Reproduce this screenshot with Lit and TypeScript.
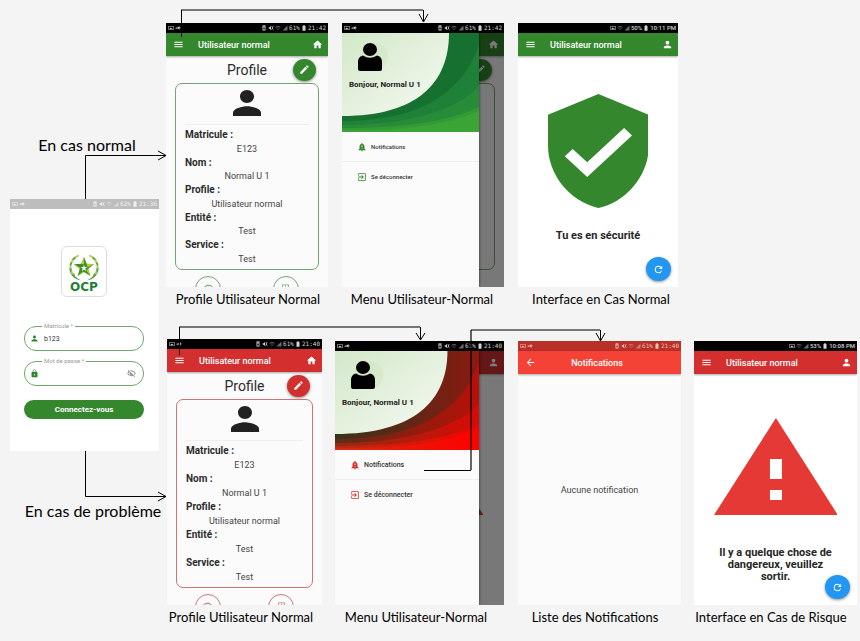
import { LitElement, html, svg, css, nothing } from "lit";
import { customElement, property } from "lit/decorators.js";
import { styleMap } from "lit/directives/style-map.js";

type Kind = "login" | "profile" | "menu" | "safe" | "list" | "risk";
type Tone = "green" | "red";

interface ScreenNode {
  kind: Kind;
  tone: Tone;
  x: number;
  y: number;
  w: number;
  h: number;
  clock: string;
  battery: string;
}

const screens: ScreenNode[] = [
  { kind: "login", tone: "green", x: 10, y: 199, w: 149, h: 252, clock: "21:36", battery: "62%" },
  { kind: "profile", tone: "green", x: 166, y: 23, w: 162, h: 264, clock: "21:42", battery: "61%" },
  { kind: "menu", tone: "green", x: 342, y: 23, w: 162, h: 264, clock: "21:42", battery: "61%" },
  { kind: "safe", tone: "green", x: 518, y: 23, w: 160, h: 264, clock: "10:11 PM", battery: "50%" },
  { kind: "profile", tone: "red", x: 167, y: 339, w: 155, h: 266, clock: "21:40", battery: "61%" },
  { kind: "menu", tone: "red", x: 335, y: 341, w: 169, h: 264, clock: "21:40", battery: "61%" },
  { kind: "list", tone: "red", x: 518, y: 341, w: 163, h: 264, clock: "21:40", battery: "61%" },
  { kind: "risk", tone: "red", x: 694, y: 341, w: 163, h: 264, clock: "10:08 PM", battery: "53%" },
];

const captions = [
  { x: 248, y: 299, text: "Profile Utilisateur Normal" },
  { x: 422, y: 299, text: "Menu Utilisateur-Normal" },
  { x: 601, y: 299, text: "Interface en Cas Normal" },
  { x: 241, y: 617, text: "Profile Utilisateur Normal" },
  { x: 416, y: 617, text: "Menu Utilisateur-Normal" },
  { x: 595, y: 617, text: "Liste des Notifications" },
  { x: 771, y: 617, text: "Interface en Cas de Risque" },
];

const branches = [
  { x: 87, y: 145, text: "En cas normal" },
  { x: 93, y: 511, text: "En cas de problème" },
];

const details = [
  ["Matricule :", "E123"],
  ["Nom :", "Normal U 1"],
  ["Profile :", "Utilisateur normal"],
  ["Entité :", "Test"],
  ["Service :", "Test"],
];

const glyphs: Record<string, string> = {
  menu: "M3 18h18v-2H3v2zm0-5h18v-2H3v2zm0-7v2h18V6H3z",
  home: "M10 20v-6h4v6h5v-8h3L12 3 2 12h3v8z",
  person: "M12 12c2.21 0 4-1.79 4-4s-1.79-4-4-4-4 1.79-4 4 1.79 4 4 4zm0 2c-2.67 0-8 1.34-8 4v2h16v-2c0-2.66-5.33-4-8-4z",
  edit: "M3 17.25V21h3.75L17.81 9.94l-3.75-3.75L3 17.25zM20.71 7.04a1 1 0 0 0 0-1.41l-2.34-2.34a1 1 0 0 0-1.41 0l-1.83 1.83 3.75 3.75 1.83-1.83z",
  lock: "M18 8h-1V6c0-2.76-2.24-5-5-5S7 3.24 7 6v2H6c-1.1 0-2 .9-2 2v10c0 1.1.9 2 2 2h12c1.1 0 2-.9 2-2V10c0-1.1-.9-2-2-2zm-6 9c-1.1 0-2-.9-2-2s.9-2 2-2 2 .9 2 2-.9 2-2 2zm3.1-9H8.9V6c0-1.71 1.39-3.1 3.1-3.1s3.1 1.39 3.1 3.1v2z",
  eyeOff: "M12 6c3.79 0 7.17 2.13 8.82 5.5a9.8 9.8 0 0 1-2.41 3.12l1.41 1.41A11.8 11.8 0 0 0 23 11.5C21.27 7.11 17 4 12 4c-1.27 0-2.49.2-3.64.57l1.65 1.65C10.66 6.09 11.32 6 12 6zM2.01 3.87l2.68 2.68A11.7 11.7 0 0 0 1 11.5C2.73 15.89 7 19 12 19c1.52 0 2.98-.29 4.32-.82l3.42 3.42 1.41-1.41L3.42 2.45 2.01 3.87zm7.5 7.5 2.61 2.61c-.04.01-.08.02-.12.02a2.5 2.5 0 0 1-2.5-2.5l.01-.13zm-3.4-3.4 1.75 1.75a4.6 4.6 0 0 0-.36 1.78 4.5 4.5 0 0 0 6.27 4.14l.98.98c-.88.24-1.8.38-2.75.38-3.79 0-7.17-2.13-8.82-5.5.7-1.43 1.72-2.61 2.93-3.53z",
  bell: "M18 16v-5c0-3.07-1.64-5.64-4.5-6.32V4a1.5 1.5 0 0 0-3 0v.68C7.63 5.36 6 7.92 6 11v5l-3 3v1h18v-1l-3-3zm-5 0h-2v-2h2v2zm0-4h-2V8h2v4zm-1 10.5a2 2 0 0 0 2-2h-4c0 1.1.9 2 2 2z",
  exit: "M10.09 15.59 11.5 17l5-5-5-5-1.41 1.41L12.67 11H3v2h9.67l-2.58 2.59zM19 3H5a2 2 0 0 0-2 2v4h2V5h14v14H5v-4H3v4a2 2 0 0 0 2 2h14a2 2 0 0 0 2-2V5a2 2 0 0 0-2-2z",
  refresh: "M17.65 6.35A7.96 7.96 0 0 0 12 4a8 8 0 1 0 7.73 10h-2.08A6 6 0 1 1 12 6c1.66 0 3.14.69 4.22 1.78L13 11h7V4l-2.35 2.35z",
  back: "M20 11H7.83l5.59-5.59L12 4l-8 8 8 8 1.41-1.41L7.83 13H20v-2z",
  wifi: "M1 9l2 2c4.97-4.97 13.03-4.97 18 0l2-2C16.93 2.93 7.08 2.93 1 9zm4 4l2 2a7.07 7.07 0 0 1 10 0l2-2C15.14 9.14 8.87 9.14 5 13zm4 4 3 3 3-3a4.24 4.24 0 0 0-6 0z",
  box: "M3 4h18v16H3V4zm2 2v12h14V6H5zm6 1h2v4h3l-4 4-4-4h3z",
  picture: "M2 4h20v16H2V4zm2 2v12h16V6H4zm2 10 4-6 3 4 2-2 3 4z",
  plug: "M2 11h4l3-5v12l-3-4H2zm9-3h4V5h3v5h4v3h-4v5h-3v-3h-4z",
  trash: "M6 6h12v16H6zM4 3h16v2H4zm5-2h6v2H9zm0 9v8h6v-8z",
  mute: "M3 9v6h4l5 5V4L7 9zm11-4 2-1 6 15-2 1zm6-1h2L15 20h-2z",
  signal: "M2 22h20V2z",
  battery: "M18 4h-3V1H9v3H6v19h12V4z",
};

const icon = (name: string) =>
  html`<svg class="icon" viewBox="0 0 24 24" aria-hidden="true"><path d=${glyphs[name]} /></svg>`;

@customElement("phone-status")
export class PhoneStatus extends LitElement {
  @property() clock = "";
  @property() battery = "";
  @property({ type: Boolean, reflect: true }) compact = false;

  static styles = css`
    :host {
      display: flex;
      align-items: center;
      gap: 1px;
      height: 10px;
      padding: 0 2px;
      font: 6px/10px "DejaVu Sans Mono", monospace;
      white-space: nowrap;
    }
    :host([compact]) {
      font-family: Roboto, sans-serif;
      font-weight: 500;
    }
    .icon {
      width: 6px;
      height: 6px;
      fill: currentColor;
    }
    .push {
      flex: 1;
    }
    .faint {
      opacity: 0.5;
    }
  `;

  render() {
    return html`
      ${this.compact ? nothing : html`${icon("picture")}${icon("plug")}`}
      <span class="push"></span>
      ${this.compact ? icon("picture") : html`${icon("trash")}${icon("mute")}`}
      <svg class="icon faint" viewBox="0 0 24 24" aria-hidden="true"><path d=${glyphs.wifi} /></svg>
      <svg class="icon faint" viewBox="0 0 24 24" aria-hidden="true"><path d=${glyphs.signal} /></svg>
      <span>${this.battery}</span>
      ${icon("battery")}
      <span>${this.clock}</span>
    `;
  }
}

@customElement("phone-screen")
export class PhoneScreen extends LitElement {
  @property() kind: Kind = "profile";
  @property({ reflect: true }) tone: Tone = "green";
  @property() clock = "";
  @property() battery = "";

  static styles = css`
    :host {
      --main: #34872d;
      --outline: #6fa86b;
      --link: 6px;
      display: flex;
      flex-direction: column;
      overflow: hidden;
      background: #fbfbfb;
      color: #2b2b2b;
      font-family: Roboto, sans-serif;
    }
    :host([tone="red"]) {
      --main: #d32f2f;
      --outline: #cf7376;
      --link: 7px;
    }
    * {
      box-sizing: border-box;
    }
    h2, h3, p, dl, dd, ul {
      margin: 0;
      padding: 0;
    }
    button {
      border: 0;
      padding: 0;
      background: none;
      color: inherit;
      font: inherit;
      display: flex;
      align-items: center;
      justify-content: center;
    }
    .icon {
      width: 11px;
      height: 11px;
      fill: currentColor;
      flex: none;
    }
    .status {
      flex: none;
      background: #000;
      color: #d5d5d5;
    }
    .status.grey {
      background: #bdbdbd;
      color: #f2f2f2;
    }
    .status.brick {
      background: #b93028;
      color: #f0c0bc;
    }
    .stage {
      flex: 1;
      min-height: 0;
      position: relative;
      display: flex;
      flex-direction: column;
    }
    .white {
      background: #fff;
    }
    .bar {
      flex: none;
      display: flex;
      align-items: center;
      height: 23px;
      padding: 0 5px 0 7px;
      background: var(--main);
      color: #fff;
      box-shadow: 0 1px 2px rgb(0 0 0 / 35%);
    }
    .bar h2 {
      flex: 1;
      margin-left: 14px;
      font-size: 9px;
      line-height: 12px;
      font-weight: 500;
    }
    .bar.flame {
      background: #f44336;
    }
    .bar.flame h2 {
      margin: 0 18px 0 0;
      text-align: center;
    }
    .heading {
      flex: none;
      display: grid;
      grid-template-columns: 1fr auto 1fr;
      align-items: center;
      height: 27px;
      padding: 0 12px;
    }
    .heading h3 {
      grid-column: 2;
      font-size: 14px;
      line-height: 18px;
      font-weight: 400;
    }
    .fab {
      grid-column: 3;
      justify-self: end;
      width: 23px;
      height: 22px;
      border-radius: 50%;
      background: var(--main);
      color: #fff;
      box-shadow: 0 1px 3px rgb(0 0 0 / 45%);
    }
    .fab.float {
      position: absolute;
      right: 7px;
      bottom: 6px;
      width: 25px;
      height: 24px;
      background: #2196f3;
    }
    .card {
      flex: 1;
      min-height: 0;
      display: flex;
      flex-direction: column;
      margin: 0 9px;
      padding: 6px 9px 4px;
      border: 1px solid var(--outline);
      border-radius: 7px;
    }
    .avatar {
      flex: none;
      align-self: center;
      width: 28px;
      height: 26px;
      fill: #212121;
    }
    .rule {
      width: 100%;
      margin: 8px 0 4px;
      border: 0;
      border-top: 1px solid #eee;
    }
    .details {
      flex: 1;
      display: flex;
      flex-direction: column;
      justify-content: space-between;
      font-size: 9px;
      line-height: 12px;
    }
    .details dt {
      font-size: 10px;
      font-weight: 700;
    }
    .details dd {
      text-align: center;
      color: #444;
    }
    .shortcuts {
      flex: none;
      display: flex;
      justify-content: space-between;
      height: 17px;
      padding: 6px 18% 0;
      color: var(--outline);
    }
    .round {
      width: 26px;
      height: 26px;
      padding-bottom: 4px;
      border: 1px solid var(--outline);
      border-radius: 50%;
    }
    .round .icon {
      width: 9px;
      height: 9px;
    }

    .login {
      align-items: center;
      padding: 37px 15px 0 14px;
      background: #fff;
      flex: 1;
      display: flex;
      flex-direction: column;
    }
    .logo {
      display: flex;
      flex-direction: column;
      align-items: center;
      width: 46px;
      height: 51px;
      padding-top: 5px;
      margin-bottom: 29px;
      border: 1px solid #ddd;
      border-radius: 6px;
      color: #1f7f35;
      font: 700 12px/10px "DejaVu Sans", sans-serif;
    }
    .emblem {
      width: 32px;
      height: 30px;
      flex: none;
    }
    .field {
      position: relative;
      display: flex;
      align-items: center;
      gap: 5px;
      width: 100%;
      height: 25px;
      margin-bottom: 10px;
      padding: 0 7px 0 5px;
      border: 1px solid var(--outline);
      border-radius: 12px;
      color: #2d842a;
    }
    .field .icon {
      width: 9px;
      height: 9px;
    }
    .field label {
      position: absolute;
      left: 17px;
      top: -5px;
      padding: 0 2px;
      background: #fff;
      color: #999;
      font-size: 6px;
      line-height: 8px;
    }
    .field input {
      flex: 1;
      min-width: 0;
      padding: 0;
      border: 0;
      outline: 0;
      background: none;
      color: #333;
      font: 7px/10px Roboto, sans-serif;
    }
    .reveal {
      color: #777;
    }
    .submit {
      width: 100%;
      height: 19px;
      margin-top: 4px;
      border-radius: 10px;
      background: var(--main);
      color: #fff;
      font-weight: 700;
      font-size: 8px;
      line-height: 10px;
    }

    .scrim {
      position: absolute;
      inset: 0;
      background: rgb(0 0 0 / 52%);
    }
    .drawer {
      position: absolute;
      inset: 0 25px 0 0;
      background: #fbfbfb;
      box-shadow: 0 0 3px rgb(0 0 0 / 60%);
    }
    .drawer-top {
      position: relative;
      height: 99px;
      padding: 10px 0 0 7px;
    }
    .waves {
      position: absolute;
      inset: 0;
      width: 100%;
      height: 100%;
    }
    .silhouette {
      position: relative;
      display: block;
      width: 24px;
      height: 28px;
      margin-left: 9px;
    }
    .hello {
      position: relative;
      margin-top: 8px;
      font-size: 8px;
      line-height: 12px;
      font-weight: 700;
      white-space: nowrap;
      color: #222;
    }
    .links {
      list-style: none;
    }
    .links li {
      border-bottom: 1px solid #eee;
    }
    .links li:last-child {
      border: 0;
    }
    .links a {
      display: flex;
      align-items: center;
      gap: 4px;
      height: 29px;
      padding-left: 15px;
      color: #333;
      font-size: var(--link);
      line-height: 10px;
      font-weight: 500;
      text-decoration: none;
    }
    .links .icon {
      width: 10px;
      height: 10px;
      fill: var(--main);
    }

    .shield {
      align-self: center;
      width: 63%;
      height: 114px;
      margin-top: 38px;
    }
    .triangle {
      align-self: center;
      width: 76%;
      height: 97px;
      margin-top: 44px;
    }
    .verdict {
      align-self: center;
      margin-top: 21px;
      font-size: 11px;
      line-height: 14px;
      font-weight: 700;
      text-align: center;
      color: #262626;
    }
    .verdict.alert {
      margin-top: 32px;
      padding: 0 20px;
      line-height: 12px;
    }
    .empty {
      flex: 1;
      display: grid;
      place-items: center;
      font-size: 9px;
      line-height: 12px;
      color: #444;
    }
  `;

  private bar(end: string, title = "Utilisateur normal") {
    return html`<header class="bar">
      <button aria-label="Menu">${icon("menu")}</button>
      <h2>${title}</h2>
      <button aria-label="Compte">${icon(end)}</button>
    </header>`;
  }

  private profile() {
    return html`
      ${this.bar("home")}
      <div class="heading">
        <h3>Profile</h3>
        <button class="fab" aria-label="Modifier">${icon("edit")}</button>
      </div>
      <section class="card">
        <svg class="avatar" viewBox="4 4 16 16" preserveAspectRatio="none" aria-hidden="true"><path d=${glyphs.person} /></svg>
        <hr class="rule" />
        <dl class="details">
          ${details.map(([name, value]) => html`<dt>${name}</dt><dd>${value}</dd>`)}
        </dl>
      </section>
      <div class="shortcuts">
        <button class="round" aria-label="Wi-Fi">${icon("wifi")}</button>
        <button class="round" aria-label="Boîte">${icon("box")}</button>
      </div>
    `;
  }

  private triangle() {
    return html`<svg class="triangle" viewBox="0 0 124 97" preserveAspectRatio="none" aria-hidden="true">
      <path fill="#e53935" d="M62 0 124 97H0z" />
      <path fill="#fff" d="M56 41h12v20H56zM56 72h12v10H56z" />
    </svg>`;
  }

  private menu() {
    const green = this.tone === "green";
    const fills = green
      ? ["#3aa535", "#339a36", "#288b37", "#1f8037", "#167131"]
      : ["url(#w0)", "url(#w1)", "url(#w2)", "url(#w3)", "url(#w4)"];
    const ramps = [
      ["w0", "#d62c10", "#ff0000"],
      ["w1", "#b82c12", "#f20400"],
      ["w2", "#8f2c14", "#d80a05"],
      ["w3", "#5f2c16", "#b81008"],
      ["w4", "#35351a", "#8a1a10"],
    ];
    return html`
      ${green
        ? html`${this.bar("home", "")}
            <div class="heading"><button class="fab" aria-label="Modifier">${icon("edit")}</button></div>
            <section class="card"></section>
            <div class="shortcuts"></div>`
        : html`${this.bar("person", "")}${this.triangle()}`}
      <div class="scrim"></div>
      <nav class="drawer">
        <div class="drawer-top">
          <svg class="waves" viewBox="0 0 137 99" preserveAspectRatio="none" aria-hidden="true">
            <defs>
              <linearGradient id="sky" x1="0" y1="0" x2="1" y2="1">
                <stop offset="0" stop-color="#d3e8c8" />
                <stop offset="1" stop-color="#f6faf4" />
              </linearGradient>
              ${ramps.map(
                ([id, from, to]) => svg`<linearGradient id=${id}>
                  <stop offset="0" stop-color=${from} /><stop offset="1" stop-color=${to} />
                </linearGradient>`
              )}
            </defs>
            <path fill=${fills[0]} d="M0 0h137v99H0z" />
            <path fill=${fills[1]} d="M0 0h137v78C105 92 60 98 0 97z" />
            <path fill=${fills[2]} d="M0 0h137v74C105 89 60 95 0 95z" />
            <path fill=${fills[3]} d="M0 0h137v53C112 80 60 92 0 92z" />
            <path fill=${fills[4]} d="M0 0h137v12C118 66 70 88 0 88z" />
            <path fill="url(#sky)" d="M0 0h107c0 50-32 83-107 83z" />
            <circle cx="32" cy="24" r="14" fill="#cfe3bf" opacity=".45" />
          </svg>
          <svg class="silhouette" viewBox="0 0 24 28" aria-hidden="true">
            <ellipse cx="12" cy="6.500" rx="7" ry="6.500" />
            <path d="M5 12.500Q0 13.500 0 19v7q0 2 2 2h20q2 0 2-2v-7q0-5.500-5-6.500-7 4.500-14 0z" />
          </svg>
          <p class="hello">Bonjour, Normal U 1</p>
        </div>
        <ul class="links">
          <li><a href="#notifications">${icon("bell")}Notifications</a></li>
          <li><a href="#deconnexion">${icon("exit")}Se déconnecter</a></li>
        </ul>
      </nav>
    `;
  }

  private login() {
    const leaves = [0, 1, 2, 3, 4, 5, 6, 7];
    const wing = svg`<path d="M13 28.500C5 27 1 21 1.500 15 3 21 7 25.500 13 28.500z" fill="#2f8a2e" />
      ${leaves.map((i) => {
        const a = ((140 + i * 14) * Math.PI) / 180;
        const x = 16 + 13.5 * Math.cos(a);
        const y = 15 + 12.5 * Math.sin(a);
        return svg`<ellipse cx=${x} cy=${y} rx="1" ry="2.400" fill=${i % 2 ? "#b4cf5a" : "#5fa445"} transform=${`rotate(${i * 14 - 30} ${x} ${y})`} />`;
      })}`;
    return html`<form class="login">
      <div class="logo">
        <svg class="emblem" viewBox="0 0 32 30" aria-hidden="true">
          ${wing}<g transform="translate(32 0) scale(-1 1)">${wing}</g>
          <path fill="#3a9130" d="M16 5l2.700 6.800 7.300.5-5.700 4.500 2 7.200-6.300-4-6.300 4 2-7.200L6 12.300l7.300-.5z" />
          <path fill="#bccf2b" d="M16 5v7.500l-2.700-.7zM26 12.300l-6.500 3-.8-3.500zM22.300 24l-4-5.500 2-1.700zM9.700 24l5-4.500 1.300.5zM6 12.300l6.500 3.500-.8 1z" />
          <path fill="#f4f7d8" d="M16 13l.9 2.100 2.300.2-1.800 1.400.6 2.300-2-1.300-2 1.300.6-2.300-1.800-1.400 2.300-.2z" />
        </svg>
        OCP
      </div>
      <div class="field">
        <label for="matricule">Matricule *</label>
        ${icon("person")}
        <input id="matricule" value="b123" />
      </div>
      <div class="field">
        <label for="passe">Mot de passe *</label>
        ${icon("lock")}
        <input id="passe" type="password" />
        <button class="reveal" type="button" aria-label="Afficher le mot de passe">${icon("eyeOff")}</button>
      </div>
      <button class="submit" type="button">Connectez-vous</button>
    </form>`;
  }

  private safe() {
    return html`${this.bar("person")}
      <svg class="shield" viewBox="3 1 18 22" preserveAspectRatio="none" aria-hidden="true">
        <path fill="#34872d" d="M12 1 3 5v6c0 5.550 3.840 10.740 9 12 5.160-1.260 9-6.450 9-12V5z" />
        <path fill="#fff" d="M10 17l-4-4 1.410-1.410L10 14.170l6.590-6.590L18 9z" />
      </svg>
      <p class="verdict">Tu es en sécurité</p>
      <button class="fab float" aria-label="Actualiser">${icon("refresh")}</button>`;
  }

  private risk() {
    return html`${this.bar("person")}${this.triangle()}
      <p class="verdict alert">Il y a quelque chose de dangereux, veuillez sortir.</p>
      <button class="fab float" aria-label="Actualiser">${icon("refresh")}</button>`;
  }

  private list() {
    return html`<header class="bar flame">
        <button aria-label="Retour">${icon("back")}</button>
        <h2>Notifications</h2>
      </header>
      <p class="empty">Aucune notification</p>`;
  }

  render() {
    const status = this.kind === "login" ? "grey" : this.kind === "list" ? "brick" : "";
    const white = this.kind === "safe" || this.kind === "risk" ? "white" : "";
    return html`
      <phone-status
        class="status ${status}"
        clock=${this.clock}
        battery=${this.battery}
        ?compact=${this.clock.endsWith("PM")}
      ></phone-status>
      <div class="stage ${white}">${this[this.kind]()}</div>
    `;
  }
}

@customElement("app-root")
export class AppRoot extends LitElement {
  static styles = css`
    :host {
      display: block;
      position: relative;
      min-height: 100vh;
      overflow: hidden;
      background: #f4f4f4;
      color: #000;
      font-family: Lato, "Open Sans", sans-serif;
    }
    .node {
      position: absolute;
    }
    .label {
      position: absolute;
      transform: translate(-50%, -50%);
      margin: 0;
      white-space: nowrap;
      font-size: 13px;
      line-height: 18px;
    }
    .branch {
      font-size: 16px;
      line-height: 20px;
    }
    .arrows {
      position: absolute;
      left: 0;
      top: 0;
      width: 860px;
      height: 641px;
      pointer-events: none;
      fill: none;
      stroke: #000;
    }
    .rail {
      stroke: #777;
      stroke-width: 2;
    }
  `;

  render() {
    const at = (x: number, y: number) => ({ left: `${x}px`, top: `${y}px` });
    return html`
      ${screens.map(
        (s) => html`<phone-screen
          class="node"
          kind=${s.kind}
          tone=${s.tone}
          clock=${s.clock}
          battery=${s.battery}
          style=${styleMap({ ...at(s.x, s.y), width: `${s.w}px`, height: `${s.h}px` })}
        ></phone-screen>`
      )}
      ${captions.map((c) => html`<p class="label" style=${styleMap(at(c.x, c.y))}>${c.text}</p>`)}
      ${branches.map((c) => html`<p class="label branch" style=${styleMap(at(c.x, c.y))}>${c.text}</p>`)}
      <svg class="arrows" viewBox="0 0 860 641" aria-hidden="true">
        <path class="rail" d="M181 10H423M179 327H420M471 330H600" />
        <path d="M85.500 199V155.500H166M158 151l8 4.500-8 4.500" />
        <path d="M85.500 451V496.500H166M158 492l8 4.500-8 4.500" />
        <path d="M181.500 10V37M423.500 10V22M419 14l4.500 8 4.500-8" />
        <path d="M179.500 327V355M420.500 327V340M416 333l4.500 7 4.500-7" />
        <path d="M424 470.500H471M600.500 330V341M596 333l4.500 8 4.500-8" />
        <path d="M471 330V470" stroke-width="2" stroke-opacity=".6" />
      </svg>
    `;
  }
}
